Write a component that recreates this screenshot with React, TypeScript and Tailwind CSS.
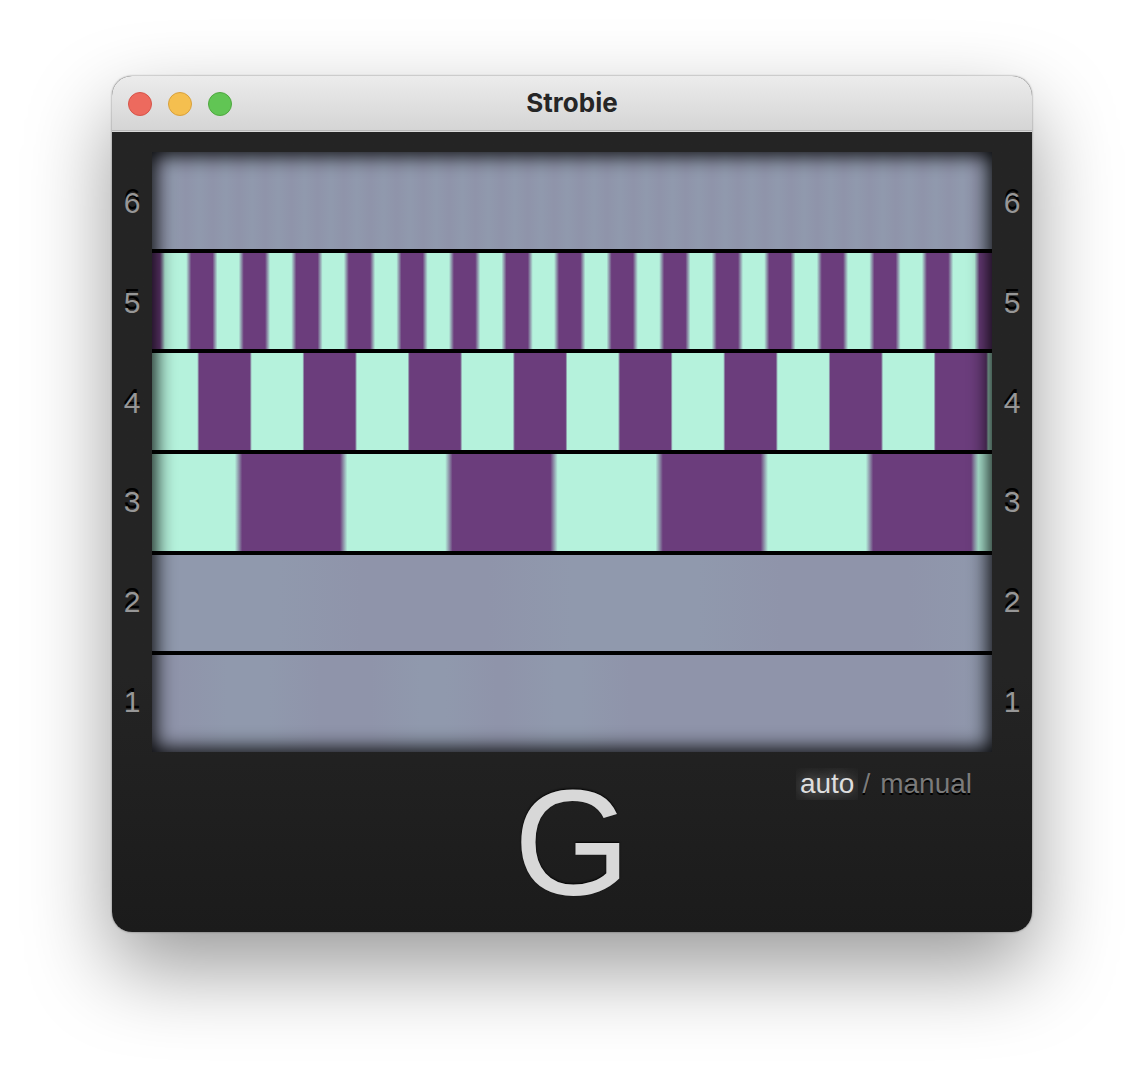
import React from "react";

type Lane = {
  label: number;
  /** Colour of the base and of the bands drawn over it. */
  base: string;
  band: string;
  /** [start, end] of each band, in % of the lane width. */
  bands: [number, number][];
  /** Half of the soft edge between base and band, in % of the lane width. */
  edge: number;
};

const MINT = "#b5f2dc";
const PURPLE = "#6b3d7c";
const STEEL = "#9099ad";
const DUSK = "#8f94aa";

/** Evenly spaced bands, from just left of the lane to its right end. */
function repeat(start: number, period: number): [number, number][] {
  const bands: [number, number][] = [];
  for (let x = start - period; x < 100; x += period) {
    bands.push([x, x + period / 2]);
  }
  return bands;
}

const lanes: Lane[] = [
  { label: 6, base: STEEL, band: DUSK, bands: repeat(3.3, 3.13), edge: 0.7 },
  { label: 5, base: MINT, band: PURPLE, bands: repeat(4.37, 6.256), edge: 0.3 },
  { label: 4, base: MINT, band: PURPLE, bands: repeat(5.5, 12.525), edge: 0.12 },
  { label: 3, base: MINT, band: PURPLE, bands: repeat(10.3, 25.04), edge: 0.44 },
  { label: 2, base: STEEL, band: DUSK, bands: repeat(20, 50), edge: 5 },
  { label: 1, base: STEEL, band: DUSK, bands: [[-6, 6], [17, 29], [38, 45], [54, 97]], edge: 3 },
];

function stripes({ base, band, bands, edge }: Lane) {
  const stops = bands.flatMap(([from, to]) => [
    `${base} ${from - edge}%`,
    `${band} ${from + edge}%`,
    `${band} ${to - edge}%`,
    `${base} ${to + edge}%`,
  ]);
  return `linear-gradient(90deg, ${stops.join(", ")})`;
}

function Labels() {
  return (
    <ol className="flex w-10 shrink-0 flex-col pt-px">
      {lanes.map((lane) => (
        <li
          key={lane.label}
          className="flex flex-1 items-center justify-center text-[30px] leading-8 text-[#979797] [text-shadow:0_-4px_0_#000]"
        >
          {lane.label}
        </li>
      ))}
    </ol>
  );
}

export default function App() {
  return (
    <main className="min-h-screen bg-white px-28 pt-19 pb-37 font-['Liberation_Sans',Arial,sans-serif]">
      <section className="overflow-hidden rounded-[20px] bg-linear-to-b from-[#242424] from-70% to-[#1b1b1b] shadow-[0_0_2px_rgba(0,0,0,0.5),0_36px_84px_rgba(0,0,0,0.4)]">
        <header className="grid h-14 grid-cols-[1fr_auto_1fr] items-center bg-linear-to-b from-[#ececec] to-[#d4d4d4] px-4 shadow-[inset_0_-1px_0_#d8d8d8,inset_0_-2px_0_#b8b8b8]">
          <div className="flex gap-4">
            <button type="button" aria-label="Close" className="size-6 rounded-full border border-[#d65449] bg-[#ed6a5e]" />
            <button type="button" aria-label="Minimize" className="size-6 rounded-full border border-[#d8a03c] bg-[#f5bf4f]" />
            <button type="button" aria-label="Zoom" className="size-6 rounded-full border border-[#4fa73f] bg-[#61c554]" />
          </div>
          <h1 className="pb-0.5 font-[Inter,sans-serif] text-[26px] leading-8 font-bold text-[#262626]">Strobie</h1>
        </header>

        <div className="flex pt-5">
          <Labels />
          <div className="relative flex h-[600px] flex-1 flex-col gap-1 bg-black">
            {lanes.map((lane) => (
              <div key={lane.label} className="flex-1" style={{ backgroundImage: stripes(lane) }} />
            ))}
            <div className="pointer-events-none absolute inset-0 shadow-[inset_0_0_20px_3px_#000]" />
          </div>
          <Labels />
        </div>

        <footer className="grid h-45 grid-cols-[1fr_auto_1fr] items-start">
          <output className="col-start-2 pt-4 text-[150px] leading-[150px] text-[#d8d8d8] [text-shadow:0_-1px_2px_#000]">G</output>
          <div className="flex justify-end gap-1 pt-4 pr-15 text-[28px] leading-8 text-[#7b7b7b]">
            <button type="button" className="overflow-hidden px-1 text-[#dedede] [text-shadow:0_0_16px_rgba(255,255,255,0.6)]">auto</button>
            <span className="pr-1.5 [text-shadow:0_2px_0_#000]">/</span>
            <button type="button" className="[text-shadow:0_2px_0_#000]">manual</button>
          </div>
        </footer>
      </section>
    </main>
  );
}
